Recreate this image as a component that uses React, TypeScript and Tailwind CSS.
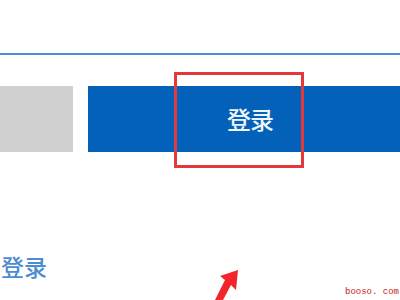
export default function App() {
  return (
    <div
      className="relative w-[400px] h-[300px] overflow-hidden bg-white"
      style={{ fontFamily: '"Noto Sans CJK SC", "Noto Sans", sans-serif' }}
    >
      <div className="h-[53px]" />
      <div className="h-[2px] bg-[#4a8fd2]" />
      <div className="h-[31px]" />
      <div className="flex h-[66px]">
        <div className="w-[73px] bg-[#d0d0d0]" />
        <div className="w-[15px]" />
        <div className="flex-1 bg-[#0461b9] flex items-center justify-start pl-[139px]">
          <span className="text-[24px] leading-none font-medium text-[#eef4fb] tracking-[-1px]">登录</span>
        </div>
      </div>
      <div className="pt-[103px] pl-[1px]">
        <span className="text-[23px] leading-none font-medium text-[#4d8cd0]">登录</span>
      </div>

      {/* red highlight box */}
      <div className="absolute left-[174px] top-[72px] w-[130px] h-[96px] border-[3px] border-[#e23a3a]" />

      {/* red arrow */}
      <svg className="absolute left-[210px] top-[266px]" width="34" height="34" viewBox="0 0 34 34">
        <path d="M28 4 L26 24 L21 19 L13 34 L5 34 L15 14 L10 10 Z" fill="#f2262a" />
      </svg>

      <div
        className="absolute right-[1px] bottom-[3px] text-[9px] leading-none text-[#c41818]"
        style={{ fontFamily: '"Liberation Mono", monospace' }}
      >
        booso. com
      </div>
    </div>
  );
}
